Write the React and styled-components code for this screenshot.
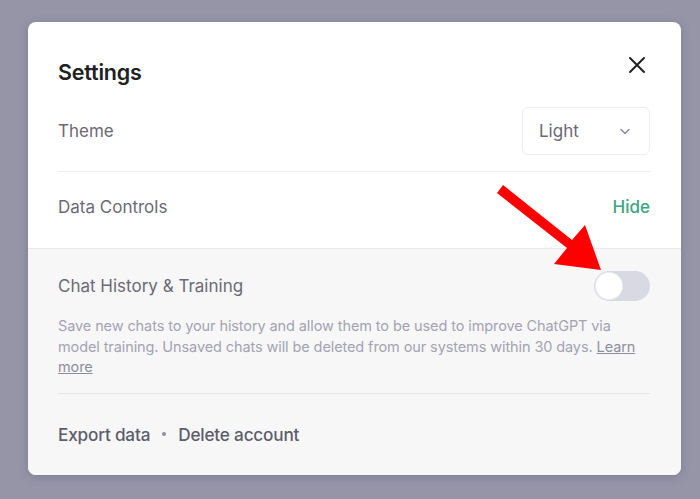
import React, { useState } from 'react'
import styled, { createGlobalStyle } from 'styled-components'

const GlobalStyle = createGlobalStyle`
  html, body { margin: 0; padding: 0; background: #9695a8; }
  body { font-family: Inter, "Noto Sans", sans-serif; }
`;

const Page = styled.div`
  position: relative;
  width: 700px;
  height: 499px;
  box-sizing: border-box;
  padding: 22px 19px 24px 28px;
  background: #9695a8;
`;

const Dialog = styled.div`
  display: flex;
  flex-direction: column;
  height: 100%;
  background: #fff;
  border-radius: 8px;
  overflow: hidden;
  box-shadow: 0 2px 10px rgba(60, 60, 80, 0.25);
`;

const Top = styled.div`
  padding: 0 31px 0 30px;
`;

const Header = styled.div`
  display: flex;
  justify-content: space-between;
  align-items: center;
  padding: 35px 0 13px;
  height: 77px;
  box-sizing: border-box;
`;

const Title = styled.h2`
  margin: 0;
  font-size: 21.5px;
  font-weight: 600;
  color: #202123;
  letter-spacing: -0.2px;
`;

const Close = styled.button`
  border: none;
  background: none;
  padding: 0;
  margin-right: 3px;
  margin-top: -13px;
  display: flex;
  color: #202123;
`;

const Row = styled.div`
  display: flex;
  justify-content: space-between;
  align-items: center;
  padding: ${p => p.$pad};
  border-bottom: ${p => (p.$line ? '1px solid #ececf1' : 'none')};
`;

const Label = styled.span`
  font-size: 17px;
  line-height: 22px;
  color: #6a6a76;
`;

const Select = styled.div`
  display: flex;
  align-items: center;
  justify-content: space-between;
  width: 128px;
  height: 48px;
  box-sizing: border-box;
  padding: 0 17px 0 16px;
  border: 1px solid #ececf1;
  border-radius: 6px;
  font-size: 17px;
  color: #6a6a76;
`;

const Hide = styled.span`
  font-size: 17px;
  color: #3ea584;
  font-weight: 500;
`;

const Bottom = styled.div`
  flex: 1;
  background: #f7f7f8;
  border-top: 1px solid #e7e7ec;
  padding: 0 31px 0 30px;
`;

const Track = styled.div`
  width: 56px;
  height: 30px;
  border-radius: 15px;
  background: ${p => (p.$on ? '#10a37f' : '#d9d9e3')};
  display: flex;
  align-items: center;
  padding: 2px;
  box-sizing: border-box;
  justify-content: ${p => (p.$on ? 'flex-end' : 'flex-start')};
  cursor: pointer;
`;

const Knob = styled.div`
  width: 26px;
  height: 26px;
  border-radius: 50%;
  background: #fff;
  box-shadow: 0 0 0 1px #ececf1;
`;

const Desc = styled.p`
  margin: 15px 0 0;
  padding-bottom: 15px;
  border-bottom: 1px solid #e3e3e8;
  font-size: 14.5px;
  line-height: 20.5px;
  color: #a3a3b2;
  letter-spacing: -0.1px;

  a {
    color: #8e8ea0;
    text-decoration: underline;
  }
`;

const Footer = styled.div`
  display: flex;
  align-items: center;
  gap: 12px;
  padding-top: 30px;
  font-size: 17.2px;
  font-weight: 500;
  color: #5d5d6b;
  letter-spacing: -0.2px;
`;

const Dot = styled.span`
  width: 4px;
  height: 4px;
  border-radius: 50%;
  background: #8e8ea0;
`;

const Arrow = styled.svg`
  position: absolute;
  left: 0;
  top: 0;
  pointer-events: none;
`;

export default function App() {
  const [on, setOn] = useState(false)
  return (
    <Page>
      <GlobalStyle />
      <Dialog>
        <Top>
          <Header>
            <Title>Settings</Title>
            <Close aria-label="Close">
              <svg width="20" height="20" viewBox="0 0 20 20" fill="none" stroke="currentColor" strokeWidth="2" strokeLinecap="round">
                <path d="M3 3l14 14M17 3L3 17" />
              </svg>
            </Close>
          </Header>
          <Row $pad="8px 0 16px" $line>
            <Label>Theme</Label>
            <Select>
              Light
              <svg width="14" height="14" viewBox="0 0 14 14" fill="none" stroke="#8e8ea0" strokeWidth="1.6" strokeLinecap="round" strokeLinejoin="round">
                <path d="M3 5.5l4 4 4-4" />
              </svg>
            </Select>
          </Row>
          <Row $pad="24px 0 30px">
            <Label>Data Controls</Label>
            <Hide>Hide</Hide>
          </Row>
        </Top>
        <Bottom>
          <Row $pad="22px 0 0">
            <Label>Chat History &amp; Training</Label>
            <Track $on={on} onClick={() => setOn(!on)}>
              <Knob />
            </Track>
          </Row>
          <Desc>
            Save new chats to your history and allow them to be used to improve ChatGPT via model training. Unsaved chats will be deleted from our systems within 30 days. <a href="#">Learn more</a>
          </Desc>
          <Footer>
            <span>Export data</span>
            <Dot />
            <span>Delete account</span>
          </Footer>
        </Bottom>
      </Dialog>
      <Arrow width="700" height="499" viewBox="0 0 700 499">
        <path d="M497 193 L503 185 L572 240 L585 225 L601 270 L554 264 L567 248 Z" fill="#f00" />
      </Arrow>
    </Page>
  )
}
